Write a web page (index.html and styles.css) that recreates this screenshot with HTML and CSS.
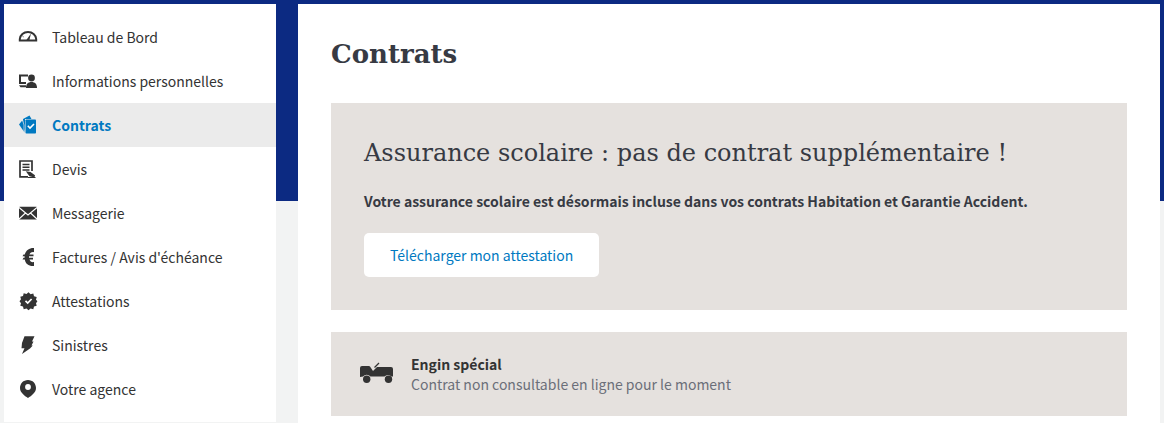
FILE: index.html
```html
<!DOCTYPE html>
<html lang="fr">
<head>
<meta charset="utf-8">
<meta name="viewport" content="width=device-width, initial-scale=1">
<title>Contrats</title>
<link rel="stylesheet" href="styles.css">
</head>
<body>
<div class="layout">
  <nav class="sidebar" aria-label="Espace client">
    <ul class="menu">
      <li><a class="menu-link" href="#">
        <svg class="icon" viewBox="0 0 20 20" aria-hidden="true"><path d="M1.800 13.500V12C2.200 8 5.500 5 10 5S17.800 8 18.200 12V13.500Z" fill="none" stroke="currentColor" stroke-width="2"/><path d="M8 13.500L13 6.500L11.300 13.500Z" fill="currentColor"/><path d="M4.500 9l1 .8" stroke="currentColor"/></svg>
        Tableau de Bord</a></li>
      <li><a class="menu-link" href="#">
        <svg class="icon" viewBox="0 0 20 20" aria-hidden="true"><path d="M10 4.500H2V12H8" fill="none" stroke="currentColor" stroke-width="2"/><path d="M1 14.200H8V16.200H2.500Z" fill="currentColor"/><circle cx="13.500" cy="7" r="3.400" fill="currentColor"/><path d="M8 17C8 13 10 11 13.500 11S19 13 19 17Z" fill="currentColor"/></svg>
        Informations personnelles</a></li>
      <li><a class="menu-link is-active" href="#" aria-current="page">
        <svg class="icon" viewBox="0 0 20 20" aria-hidden="true"><path d="M5 4L11.500 .5L13.500 4H7V16L5.500 13Z" fill="currentColor"/><path d="M4.200 5.500L1 9.500L6.500 17.500V9Z" fill="currentColor"/><path d="M4.500 5L6 10V17" fill="none" stroke="#ebebeb" stroke-width=".7"/><rect x="7.500" y="4.500" width="10.500" height="14" rx=".8" fill="currentColor"/><path d="M9.800 10.800l2.200 2.200 4-4" fill="none" stroke="#fff" stroke-width="1.600"/></svg>
        Contrats</a></li>
      <li><a class="menu-link" href="#">
        <svg class="icon" viewBox="0 0 20 20" aria-hidden="true"><path d="M14 12V2H2V17.800H10" fill="none" stroke="currentColor" stroke-width="1.700"/><path d="M4.500 5.500H11.500M4.500 8.300H11.500M4.500 11H11.500" stroke="currentColor" stroke-width="1.500"/><path d="M7.800 12.300L12.500 13L17 16.200L16.500 18.500L11.500 17.200Z" fill="currentColor"/><path d="M10 18.500H17.500" stroke="currentColor"/></svg>
        Devis</a></li>
      <li><a class="menu-link" href="#">
        <svg class="icon" viewBox="0 0 20 20" aria-hidden="true"><rect x="1" y="3.800" width="18" height="12.700" rx=".8" fill="currentColor"/><path d="M1 4.500L10 12L19 4.500M1 16L7.500 10M19 16L12.500 10" fill="none" stroke="#fff" stroke-width="1.100"/></svg>
        Messagerie</a></li>
      <li><a class="menu-link" href="#">
        <svg class="icon" viewBox="0 0 20 20" aria-hidden="true"><path d="M16 1V5.200C13.500 4.800 12 6 11.500 7.500H15.500V9.200H11V10.800H15V12.500H11.500C12 14.500 13.800 15.500 16 15V19C11 19.500 7.500 17 6.800 12.500H4.500L5.500 10.800H6.600V9.200H4.500L5.500 7.500H6.800C8 3 11.500 .8 16 1Z" fill="currentColor"/></svg>
        Factures / Avis d'échéance</a></li>
      <li><a class="menu-link" href="#">
        <svg class="icon" viewBox="0 0 20 20" aria-hidden="true"><path d="M10.500 1.200L12.600 3.200L15.300 2.400L16 5.200L18.700 6L18 8.700L19.400 10.200L18 12.200L18.700 14.800L16 15.500L15.300 18.200L12.600 17.500L10.500 19.300L8.500 17.500L5.700 18.200L5 15.500L2.300 14.800L3 12.200L1.500 10.200L3 8.300L2.300 5.700L5 5L5.700 2.300L8.500 3.100Z" fill="currentColor"/><path d="M7.500 9.800l2.200 2.200 3.900-4" fill="none" stroke="#fff" stroke-width="1.700"/></svg>
        Attestations</a></li>
      <li><a class="menu-link" href="#">
        <svg class="icon" viewBox="0 0 20 20" aria-hidden="true"><path d="M6.500 1.200H16.500L14 6.500H15.500L13.500 10.500H14.800L12 13.500L4 19L6.500 13.200H3.500L4 8Z" fill="currentColor"/></svg>
        Sinistres</a></li>
      <li><a class="menu-link" href="#">
        <svg class="icon" viewBox="0 0 20 20" aria-hidden="true"><path fill-rule="evenodd" d="M10 1C5.300 1 2 4.600 2 9C2 13.500 6.500 16.800 10 19C13.500 16.800 18 13.500 18 9C18 4.600 14.700 1 10 1ZM10 5.100A2.900 2.900 0 1 1 10 10.900A2.900 2.900 0 1 1 10 5.100Z" fill="currentColor"/></svg>
        Votre agence</a></li>
    </ul>
  </nav>
  <main class="content">
    <h1 class="page-title">Contrats</h1>
    <section class="card notice">
      <h2 class="notice-title">Assurance scolaire : pas de contrat supplémentaire !</h2>
      <p class="notice-text">Votre assurance scolaire est désormais incluse dans vos contrats Habitation et Garantie Accident.</p>
      <button class="button" type="button">Télécharger mon attestation</button>
    </section>
    <section class="card contract">
      <svg class="contract-icon" viewBox="0 0 34 24" aria-hidden="true"><path d="M2 4H9Q10 4 11 6L13 9L17 5H31Q33 5 33 7V14.500H31.500A4.700 4.700 0 0 0 24.500 14.500H10.500A4.700 4.700 0 0 0 3 14.500L0 15V6Q0 4 2 4Z" fill="currentColor"/><path d="M14.500 5.500L19 1" stroke="currentColor" stroke-width="1.300"/><circle cx="6.700" cy="17.300" r="3.700" fill="currentColor"/><circle cx="28.500" cy="17.300" r="3.700" fill="currentColor"/></svg>
      <div>
        <h3 class="contract-name">Engin spécial</h3>
        <p class="contract-status">Contrat non consultable en ligne pour le moment</p>
      </div>
    </section>
  </main>
</div>
</body>
</html>
```
FILE: styles.css
```css
* { box-sizing: border-box; }

body {
  margin: 0;
  min-height: 100vh;
  background: #f2f3f3 linear-gradient(#0c2a82, #0c2a82) top / 100% 201px no-repeat;
  color: #333;
  font: 14px/20px "Noto Sans CJK JP", "Noto Sans CJK SC", "Open Sans", sans-serif;
}

h1, h2, h3, p, ul { margin: 0; padding: 0; }

.layout {
  display: flex;
  align-items: flex-start;
  gap: 22px;
  min-height: 100vh;
  padding: 4px 4px 0;
}

.sidebar {
  flex: 0 0 272px;
  padding: 11px 0;
  background: #fff;
}

.menu { list-style: none; }

.menu-link {
  display: flex;
  align-items: center;
  gap: 14px;
  padding: 12px 14px;
  color: #333;
  text-decoration: none;
}

.menu-link.is-active {
  background: #ebebeb;
  color: #0079c1;
  font-weight: 700;
}

.icon { flex: none; width: 20px; height: 20px; }

.content {
  flex: 1;
  align-self: stretch;
  min-width: 0;
  padding: 32px 33px 7px;
  background: #fff;
}

.page-title {
  margin-bottom: 31px;
  color: #373a43;
  font: 700 26px/36px "DejaVu Serif", serif;
}

.card { background: #e5e1de; }

.notice {
  margin-bottom: 22px;
  padding: 33px;
}

.notice-title {
  margin-bottom: 21px;
  color: #373a43;
  font: 400 24px/34px "DejaVu Serif", serif;
}

.notice-text {
  margin-bottom: 22px;
  color: #373a43;
  font-weight: 700;
}

.button {
  padding: 12px 26px;
  border: 0;
  border-radius: 5px;
  background: #fff;
  color: #0079c1;
  font: inherit;
  cursor: pointer;
}

.contract {
  display: flex;
  align-items: center;
  gap: 17px;
  padding: 22px 29px;
}

.contract-icon { flex: none; width: 34px; height: 24px; }

.contract-name { font-size: 14px; font-weight: 700; }

.contract-status { color: #6b6f79; }
```
